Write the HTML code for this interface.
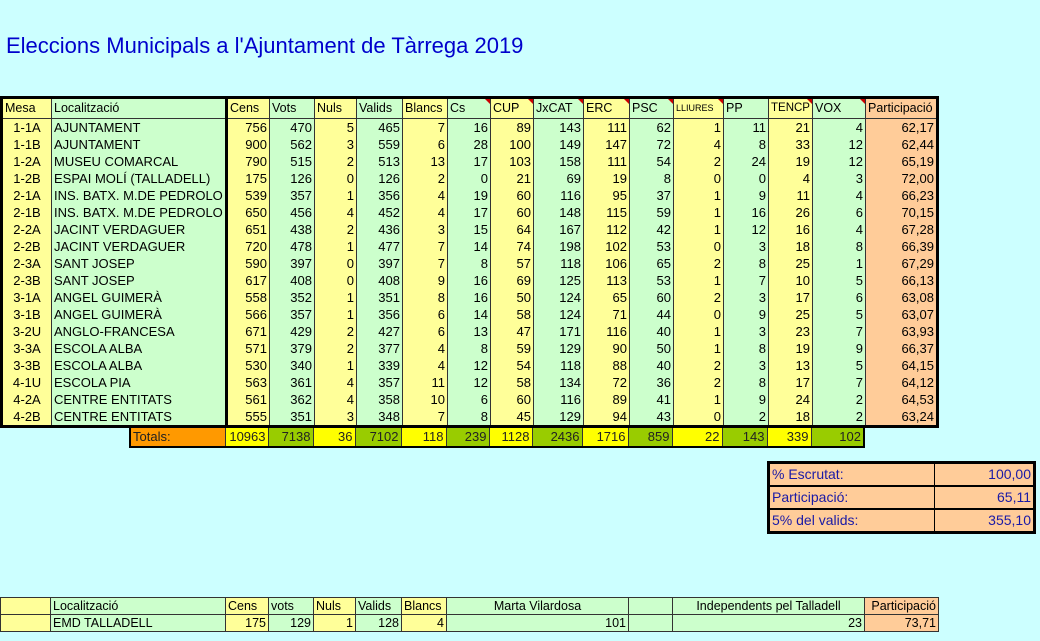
<!DOCTYPE html>
<html><head><meta charset="utf-8"><style>
body{margin:0;width:1040px;height:641px;background:#ccffff;font-family:"Liberation Sans",Arial,sans-serif;position:relative;overflow:hidden}
.t{position:absolute;left:6px;top:33px;font-size:22px;color:#0000cc;white-space:nowrap}
table{border-collapse:collapse;table-layout:fixed;position:absolute;font-size:13px;color:#000}
td{padding:0 2px;white-space:nowrap;overflow:hidden;border-left:1px solid #333;border-right:1px solid #333;text-align:right;height:17px;line-height:17px}
.y{background:#ffff99}.g{background:#ccffcc}.o{background:#ffcc99}
#m{left:0;top:96px;border:3px solid #000}
#m tr.h td{height:19px;line-height:19px;border-bottom:1px solid #333;text-align:left;font-size:12.5px}
#m td.l{text-align:left}
#m td.c{text-align:center}
#m td.bk{border-right:3px solid #000}
.r{position:relative}
.r:after{content:"";position:absolute;right:0;top:0;border-top:5px solid #c00;border-left:5px solid transparent}
#tot{left:129px;top:426px;border:2px solid #000}
#tot td{height:18px;line-height:18px;font-size:13px;color:#222}
.Y{background:#ffff00}.G{background:#99cc00}.O{background:#ff9900}
#s{left:767px;top:461px;border:3px solid #000;font-size:14px;color:#1a1aa6}
#s td{height:21px;line-height:21px;border:1px solid #000;border-width:0 0 2px 0;background:#ffcc99}
#b{left:0;top:597px;font-size:12.5px}
#b td{border:1px solid #333;height:16px;line-height:16px}
</style></head><body>
<div class="t">Eleccions Municipals a l'Ajuntament de Tàrrega 2019</div>
<table id="m">
<colgroup><col style="width:50px"><col style="width:175px"><col style="width:43px"><col style="width:45px"><col style="width:42px"><col style="width:46px"><col style="width:45px"><col style="width:43px"><col style="width:43px"><col style="width:50px"><col style="width:46px"><col style="width:44px"><col style="width:50px"><col style="width:45px"><col style="width:44px"><col style="width:53px"><col style="width:72px"></colgroup>
<tr class="h"><td class="y">Mesa</td><td class="g bk">Localització</td><td class="y">Cens</td><td class="g">Vots</td><td class="y">Nuls</td><td class="g">Valids</td><td class="y">Blancs</td><td class="g r c">Cs</td><td class="y r c">CUP</td><td class="g r c">JxCAT</td><td class="y r c">ERC</td><td class="g r c">PSC</td><td class="y r c" style="font-size:9px">LLIURES</td><td class="g c">PP</td><td class="y r" style="font-size:11.5px">TENCP</td><td class="g r c">VOX</td><td class="o">Participació</td></tr>
<tbody id="rows"></tbody>
</table>
<table id="tot">
<colgroup><col style="width:95px"><col style="width:43px"><col style="width:45px"><col style="width:42px"><col style="width:46px"><col style="width:45px"><col style="width:43px"><col style="width:43px"><col style="width:50px"><col style="width:46px"><col style="width:44px"><col style="width:50px"><col style="width:45px"><col style="width:44px"><col style="width:53px"></colgroup>
<tr><td class="O" style="text-align:left">Totals:</td><td class="Y">10963</td><td class="G">7138</td><td class="Y">36</td><td class="G">7102</td><td class="Y">118</td><td class="G">239</td><td class="Y">1128</td><td class="G">2436</td><td class="Y">1716</td><td class="G">859</td><td class="Y">22</td><td class="G">143</td><td class="Y">339</td><td class="G">102</td></tr>
</table>
<table id="s">
<colgroup><col style="width:166px"><col style="width:100px"></colgroup>
<tr><td style="text-align:left;border-right:1px solid #000">% Escrutat:</td><td>100,00</td></tr>
<tr><td style="text-align:left;border-right:1px solid #000">Participació:</td><td>65,11</td></tr>
<tr><td style="text-align:left;border-right:1px solid #000;border-bottom:0">5% del valids:</td><td style="border-bottom:0">355,10</td></tr>
</table>
<table id="b">
<colgroup><col style="width:50px"><col style="width:175px"><col style="width:43px"><col style="width:45px"><col style="width:42px"><col style="width:46px"><col style="width:45px"><col style="width:182px"><col style="width:44px"><col style="width:192px"><col style="width:74px"></colgroup>
<tr><td class="y"></td><td class="g" style="text-align:left">Localització</td><td class="y" style="text-align:left">Cens</td><td class="g" style="text-align:left">vots</td><td class="y" style="text-align:left">Nuls</td><td class="g" style="text-align:left">Valids</td><td class="y" style="text-align:left">Blancs</td><td class="g" style="text-align:center">Marta Vilardosa</td><td class="g"></td><td class="g" style="text-align:center">Independents pel Talladell</td><td class="o">Participació</td></tr>
<tr><td class="y"></td><td class="g" style="text-align:left">EMD TALLADELL</td><td class="y">175</td><td class="g">129</td><td class="y">1</td><td class="g">128</td><td class="y">4</td><td class="g">101</td><td class="g"></td><td class="g">23</td><td class="o">73,71</td></tr>
</table>
<script>
var d=`1-1A|AJUNTAMENT|756 470 5 465 7 16 89 143 111 62 1 11 21 4 62,17
1-1B|AJUNTAMENT|900 562 3 559 6 28 100 149 147 72 4 8 33 12 62,44
1-2A|MUSEU COMARCAL|790 515 2 513 13 17 103 158 111 54 2 24 19 12 65,19
1-2B|ESPAI MOLÍ (TALLADELL)|175 126 0 126 2 0 21 69 19 8 0 0 4 3 72,00
2-1A|INS. BATX. M.DE PEDROLO|539 357 1 356 4 19 60 116 95 37 1 9 11 4 66,23
2-1B|INS. BATX. M.DE PEDROLO|650 456 4 452 4 17 60 148 115 59 1 16 26 6 70,15
2-2A|JACINT VERDAGUER|651 438 2 436 3 15 64 167 112 42 1 12 16 4 67,28
2-2B|JACINT VERDAGUER|720 478 1 477 7 14 74 198 102 53 0 3 18 8 66,39
2-3A|SANT JOSEP|590 397 0 397 7 8 57 118 106 65 2 8 25 1 67,29
2-3B|SANT JOSEP|617 408 0 408 9 16 69 125 113 53 1 7 10 5 66,13
3-1A|ANGEL GUIMERÀ|558 352 1 351 8 16 50 124 65 60 2 3 17 6 63,08
3-1B|ANGEL GUIMERÀ|566 357 1 356 6 14 58 124 71 44 0 9 25 5 63,07
3-2U|ANGLO-FRANCESA|671 429 2 427 6 13 47 171 116 40 1 3 23 7 63,93
3-3A|ESCOLA ALBA|571 379 2 377 4 8 59 129 90 50 1 8 19 9 66,37
3-3B|ESCOLA ALBA|530 340 1 339 4 12 54 118 88 40 2 3 13 5 64,15
4-1U|ESCOLA PIA|563 361 4 357 11 12 58 134 72 36 2 8 17 7 64,12
4-2A|CENTRE ENTITATS|561 362 4 358 10 6 60 116 89 41 1 9 24 2 64,53
4-2B|CENTRE ENTITATS|555 351 3 348 7 8 45 129 94 43 0 2 18 2 63,24`;
var h='';d.split('\n').forEach(function(l){var p=l.split('|'),n=p[2].split(' ');
h+='<tr><td class="y c">'+p[0]+'</td><td class="g l bk">'+p[1]+'</td>';
for(var i=0;i<14;i++)h+='<td class="'+(i%2?'g':'y')+'">'+n[i]+'</td>';
h+='<td class="o">'+n[14]+'</td></tr>';});
document.getElementById('rows').innerHTML=h;
</script>
</body></html>
